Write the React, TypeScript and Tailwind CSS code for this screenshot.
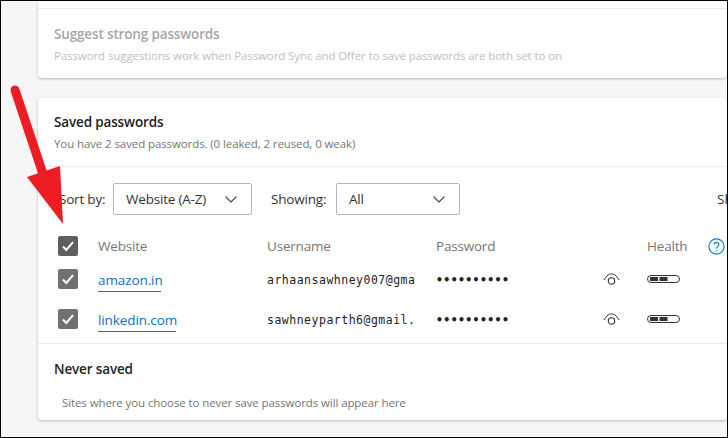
const sans = "font-['Open_Sans','Noto_Sans',sans-serif]";

function Check({ dark }: { dark?: boolean }) {
  return (
    <div className={`flex h-5 w-5 items-center justify-center rounded-[2px] ${dark ? 'bg-[#5f5f5f]' : 'bg-[#707070]'}`}>
      <svg width="14" height="14" viewBox="0 0 14 14" fill="none">
        <path d="M2 7.5 L5.3 11 L12 3.2" stroke="#fff" strokeWidth="2" />
      </svg>
    </div>
  );
}

function Chevron() {
  return (
    <svg width="12" height="7" viewBox="0 0 12 7" fill="none">
      <path d="M0.5 0.5 L6 6 L11.5 0.5" stroke="#444" strokeWidth="1.1" />
    </svg>
  );
}

function Eye() {
  return (
    <svg width="17" height="13" viewBox="0 0 17 13" fill="none">
      <path d="M1 7 C4 2 6 1 8.5 1 C11 1 13 2 16 7" stroke="#333" strokeWidth="1" />
      <circle cx="8.5" cy="8" r="3.2" stroke="#333" strokeWidth="1.1" />
    </svg>
  );
}

function Health() {
  return (
    <svg width="33" height="9" viewBox="0 0 33 9" fill="none">
      <rect x="0.5" y="0.5" width="32" height="7" rx="3.5" stroke="#333" />
      <path d="M3 2 H11 V6 H3 Z M12.5 2 H20.5 V6 H12.5 Z" fill="#333" />
    </svg>
  );
}

function Row({ site, siteWidth, user }: { site: string; siteWidth: string; user: string }) {
  return (
    <div className="flex h-10 items-center pl-[20px]">
      <div className="w-10 shrink-0">
        <Check />
      </div>
      <div className="w-[169px] shrink-0">
        <span className={`inline-block border-b border-[#0078d4] pb-[1px] text-[13.5px] leading-[19px] tracking-[-0.1px] text-[#0e6fc0] ${siteWidth}`}>{site}</span>
      </div>
      <div className="w-[169px] shrink-0 whitespace-nowrap pt-[3px] font-['DejaVu_Sans_Mono',monospace] text-[11.5px] tracking-[0.5px] text-[#222]">{user}</div>
      <div className="w-[167px] shrink-0 pt-[4px] font-['DejaVu_Sans_Mono',monospace] text-[11.5px] font-bold tracking-[0.4px] text-[#222]">••••••••••</div>
      <div className="flex w-[44px] shrink-0">
        <Eye />
      </div>
      <div className="flex">
        <Health />
      </div>
    </div>
  );
}

export default function App() {
  return (
    <div className={`relative flex h-[438px] w-[728px] flex-col overflow-hidden border border-black bg-[#f6f6f6] pl-[37px] ${sans}`}>
      <div className="h-[77px] shrink-0 rounded-b-[4px] bg-white shadow-[0_1px_3px_rgba(0,0,0,0.25)]">
        <div className="h-[8px] border-b border-[#ebebeb]" />
        <div className="px-[16px] pt-[15px]">
          <div className="text-[13.5px] font-semibold leading-[20px] tracking-[-0.15px] text-[#a6a6a6]">Suggest strong passwords</div>
          <div className="mt-[4px] whitespace-nowrap text-[11.5px] leading-[16px] tracking-[-0.1px] text-[#c0c0c0]">
            Password suggestions work when Password Sync and Offer to save passwords are both set to on
          </div>
        </div>
      </div>

      <div className="mt-[20px] h-[322px] shrink-0 rounded-[4px] bg-white shadow-[0_1px_3px_rgba(0,0,0,0.25)]">
        <div className="h-[69px] border-b border-[#ebebeb] px-[16px] pt-[14px]">
          <div className="text-[13.5px] font-semibold leading-[20px] tracking-[-0.15px] text-[#222]">Saved passwords</div>
          <div className="mt-[4px] whitespace-nowrap text-[11.5px] leading-[16px] tracking-[-0.1px] text-[#767676]">
            You have 2 saved passwords. (0 leaked, 2 reused, 0 weak)
          </div>
        </div>

        <div className="flex items-center pl-[21px] pt-[16px]">
          <span className="w-[54px] shrink-0 text-[13.5px] tracking-[-0.2px] text-[#333]">Sort by:</span>
          <div className="flex h-[32px] w-[139px] shrink-0 items-center justify-between rounded-[2px] border border-[#b5b5b5] pl-[12px] pr-[14px] text-[13.5px] tracking-[-0.2px] text-[#333]">
            Website (A-Z) <Chevron />
          </div>
          <span className="ml-[19px] w-[65px] shrink-0 text-[13.5px] tracking-[-0.2px] text-[#333]">Showing:</span>
          <div className="flex h-[32px] w-[124px] shrink-0 items-center justify-between rounded-[2px] border border-[#b5b5b5] pl-[12px] pr-[14px] text-[13.5px] tracking-[-0.2px] text-[#333]">
            All <Chevron />
          </div>
          <span className="ml-[257px] shrink-0 whitespace-nowrap text-[13.5px] text-[#333]">Sh</span>
        </div>

        <div className="mt-[20px] flex h-[22px] items-center pl-[20px] text-[13.5px] tracking-[-0.2px] text-[#767676]">
          <div className="w-10 shrink-0">
            <Check dark />
          </div>
          <span className="w-[169px] shrink-0">Website</span>
          <span className="w-[169px] shrink-0">Username</span>
          <span className="w-[211px] shrink-0">Password</span>
          <span className="w-[61px] shrink-0">Health</span>
          <svg width="17" height="17" viewBox="0 0 17 17" fill="none" className="shrink-0">
            <circle cx="8.5" cy="8.5" r="7.6" stroke="#0e7ad0" strokeWidth="1.1" />
            <path d="M6.2 6.6 C6.2 3.6 10.8 3.6 10.8 6.5 C10.8 8.4 8.5 8.3 8.5 10.6" stroke="#0e7ad0" strokeWidth="1.2" />
            <circle cx="8.5" cy="12.8" r="0.8" fill="#0e7ad0" />
          </svg>
        </div>

        <div className="mt-[2px]">
          <Row site="amazon.in" siteWidth="w-[63px]" user="arhaansawhney007@gma" />
          <Row site="linkedin.com" siteWidth="w-[78px]" user="sawhneyparth6@gmail." />
        </div>

        <div className="mt-[4px] border-t border-[#ebebeb] px-[16px] pt-[15px]">
          <div className="text-[13.5px] font-semibold leading-[20px] tracking-[-0.15px] text-[#222]">Never saved</div>
          <div className="ml-[8px] mt-[16px] whitespace-nowrap text-[11.5px] leading-[16px] tracking-[-0.1px] text-[#767676]">
            Sites where you choose to never save passwords will appear here
          </div>
        </div>
      </div>

      <svg width="80" height="150" viewBox="0 0 80 150" fill="none" className="absolute left-[0px] top-[80px]">
        <path d="M14 9 L47 108" stroke="#ee1c25" strokeWidth="9" strokeLinecap="round" />
        <path d="M26 96 L59 85 L62 143 Z" fill="#ee1c25" />
      </svg>
    </div>
  );
}
